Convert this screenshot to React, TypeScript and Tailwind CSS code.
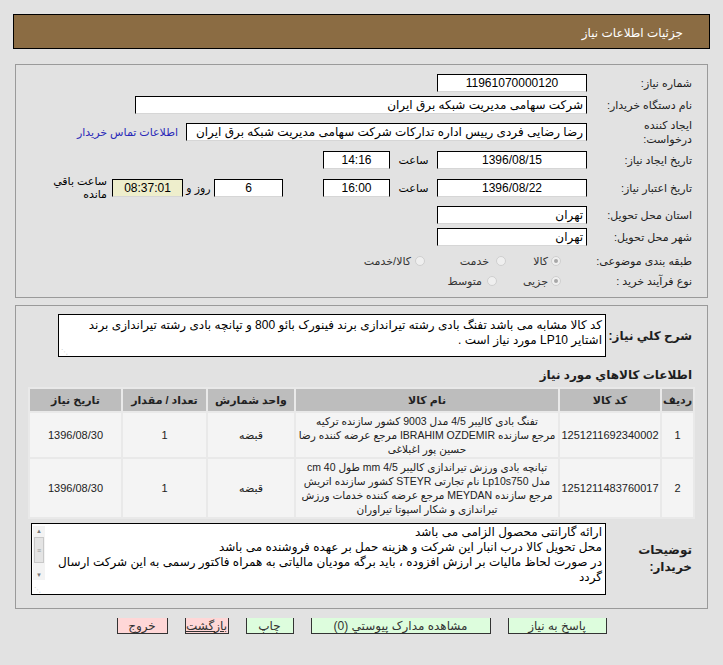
import React from 'react';

const Box = ({ w, children, align = 'center', bg = 'bg-white' }: { w: string; children?: React.ReactNode; align?: string; bg?: string }) => (
  <div className={`${w} ${bg} h-[18px] border-t border-x border-black border-b border-b-[#d6d6d6] flex items-center px-[3px] text-[12px] whitespace-nowrap overflow-hidden ${align === 'center' ? 'justify-center' : 'justify-start'}`}>
    {children}
  </div>
);

const Radio = ({ on }: { on?: boolean }) => (
  <span className="w-[10px] h-[10px] rounded-full border border-[#cfcfcf] bg-[#efefef] flex items-center justify-center shrink-0">
    {on && <span className="w-[4px] h-[4px] rounded-full bg-[#a8a8a8]" />}
  </span>
);

const Label = ({ children }: { children: React.ReactNode }) => (
  <div className="w-[105px] shrink-0 leading-[14px] text-[#1e1e1e]">{children}</div>
);

export default function App() {
  return (
    <div dir="rtl" className="min-h-[665px] bg-[#e2e2e2] pt-[14px] text-[11px] text-black font-['Liberation_Sans','DejaVu_Sans',sans-serif]">
      {/* header */}
      <div className="mx-[13px] h-[35px] border border-black bg-[#8b6c43] flex items-center pr-[26px] pt-[2px] text-white text-[12px]">
        جزئیات اطلاعات نیاز
      </div>

      {/* main info panel */}
      <div className="mx-[15px] mt-[15px] border border-[#9a9a9a] pt-[7px] pb-[7px] pr-[15px]">
        <div className="flex items-center h-[22px]">
          <Label>شماره نیاز:</Label>
          <Box w="w-[150px]">11961070000120</Box>
        </div>
        <div className="flex items-center h-[22px]">
          <Label>نام دستگاه خریدار:</Label>
          <Box w="w-[452px]" align="start">شرکت سهامی مدیریت شبکه برق ایران</Box>
        </div>
        <div className="flex items-center h-[32px]">
          <Label>
            ایجاد کننده
            <br />
            درخواست:
          </Label>
          <Box w="w-[401px]" align="start">رضا رضایی فردی رییس اداره تدارکات شرکت سهامی مدیریت شبکه برق ایران</Box>
          <a className="mr-[8px] text-[#2a2ab8] whitespace-nowrap">اطلاعات تماس خریدار</a>
        </div>
        <div className="flex items-center h-[24px]">
          <Label>تاریخ ایجاد نیاز:</Label>
          <Box w="w-[150px]">1396/08/15</Box>
          <div className="w-[47px] text-center">ساعت</div>
          <Box w="w-[67px]">14:16</Box>
        </div>
        <div className="flex items-center h-[32px]">
          <Label>تاریخ اعتبار نیاز:</Label>
          <Box w="w-[150px]">1396/08/22</Box>
          <div className="w-[47px] text-center">ساعت</div>
          <Box w="w-[67px]">16:00</Box>
          <div className="w-[40px]" />
          <Box w="w-[69px]">6</Box>
          <div className="w-[31px] text-center whitespace-nowrap">روز و</div>
          <Box w="w-[71px]" bg="bg-[#eeeecc]">08:37:01</Box>
          <div className="mr-[5px] w-[64px] leading-[13px]">
            ساعت باقي
            <br />
            مانده
          </div>
        </div>
        <div className="flex items-center h-[22px]">
          <Label>استان محل تحویل:</Label>
          <Box w="w-[150px]" align="start">تهران</Box>
        </div>
        <div className="flex items-center h-[22px]">
          <Label>شهر محل تحویل:</Label>
          <Box w="w-[150px]" align="start">تهران</Box>
        </div>
        <div className="flex items-center h-[22px] mt-[2px]">
          <Label>طبقه بندی موضوعی:</Label>
          <div className="flex items-center text-[#333] mr-[26px]">
            <div className="flex items-center gap-[3px] w-[55px]"><Radio on />کالا</div>
            <div className="flex items-center gap-[7px] w-[81px]"><Radio />خدمت</div>
            <div className="flex items-center gap-[4px]"><Radio />کالا/خدمت</div>
          </div>
        </div>
        <div className="flex items-center h-[18px]">
          <Label>نوع فرآیند خرید :</Label>
          <div className="flex items-center text-[#333] mr-[26px]">
            <div className="flex items-center gap-[3px] w-[64px]"><Radio on />جزیی</div>
            <div className="flex items-center gap-[5px]"><Radio />متوسط</div>
          </div>
        </div>
      </div>

      {/* details panel */}
      <div className="mx-[15px] mt-[7px] border border-[#9a9a9a] pt-[8px] pb-[13px] pr-[12px]">
        <div className="flex items-center">
          <div className="w-[89px] pr-[3px] font-bold text-[12px] text-[#1e1e1e] whitespace-nowrap">شرح کلي نیاز:</div>
          <div className="relative w-[548px] h-[43px] bg-white border border-black px-[3px] pt-[3px] text-[12px] leading-[15px] whitespace-nowrap overflow-hidden">
            <div>کد کالا مشابه می باشد تفنگ بادی رشته تیراندازی برند فینورک بائو 800 و تپانچه بادی رشته تیراندازی برند</div>
            <div>اشتایر LP10 مورد نیاز است .</div>
            <span className="absolute left-[2px] bottom-[1px] text-[7px] leading-none text-[#bbb]">⋰</span>
          </div>
        </div>

        <div className="mt-[8px] pr-[3px] h-[20px] flex items-center font-bold text-[12px] text-[#1e1e1e]">اطلاعات کالاهاي مورد نیاز</div>

        <table className="mt-[2px] w-[667px] table-fixed border-separate border-spacing-[2px] bg-[#e9e9e9] text-center">
          <thead>
            <tr className="h-[22px] bg-[#bdbdbd] font-bold text-[11px] text-[#222]">
              <th className="w-[31px] font-bold">ردیف</th>
              <th className="w-[100px] font-bold">کد کالا</th>
              <th className="w-[262px] font-bold">نام کالا</th>
              <th className="w-[86px] font-bold">واحد شمارش</th>
              <th className="w-[83px] font-bold">تعداد / مقدار</th>
              <th className="font-bold">تاریخ نیاز</th>
            </tr>
          </thead>
          <tbody className="bg-[#f4f4f4] text-[#222] text-[11px] leading-[14px]">
            <tr>
              <td>1</td>
              <td className="px-0 whitespace-nowrap">1251211692340002</td>
              <td className="py-[1px] px-0 text-[10.5px] whitespace-nowrap">
                تفنگ بادی کالیبر 4/5 مدل 9003 کشور سازنده ترکیه
                <br />
                مرجع سازنده IBRAHIM OZDEMIR مرجع عرضه کننده رضا
                <br />
                حسین پور اغبلاغی
              </td>
              <td>قبضه</td>
              <td>1</td>
              <td>1396/08/30</td>
            </tr>
            <tr>
              <td>2</td>
              <td className="px-0 whitespace-nowrap">1251211483760017</td>
              <td className="py-[1px] px-0 text-[10.5px] whitespace-nowrap">
                تپانچه بادی ورزش تیراندازی کالیبر 4/5 mm طول 40 cm
                <br />
                مدل Lp10s750 نام تجارتی STEYR کشور سازنده اتریش
                <br />
                مرجع سازنده MEYDAN مرجع عرضه کننده خدمات ورزش
                <br />
                تیراندازی و شکار اسپوتا تیراوران
              </td>
              <td>قبضه</td>
              <td>1</td>
              <td>1396/08/30</td>
            </tr>
          </tbody>
        </table>

        <div className="mt-[4px] flex items-center">
          <div className="w-[89px] pr-[3px] font-bold text-[12px] text-[#1e1e1e] leading-[17px]">
            توضیحات
            <br />
            خریدار:
          </div>
          <div className="relative w-[575px] h-[72px] bg-white border border-black pr-[3px] pt-[1px] text-[12px] leading-[15px] whitespace-nowrap overflow-hidden">
            <div>ارائه گارانتی محصول الزامی می باشد</div>
            <div>محل تحویل کالا درب انبار این شرکت و هزینه حمل بر عهده فروشنده می باشد</div>
            <div>در صورت لحاظ مالیات بر ارزش افزوده ، باید برگه مودیان مالیاتی به همراه فاکتور رسمی به این شرکت ارسال</div>
            <div>گردد</div>
            {/* scrollbar */}
            <div className="absolute left-[1px] top-[2px] w-[12px] h-[54px] bg-[#f3f3f3] flex flex-col items-center">
              <span className="h-[10px] text-[6px] leading-[10px] text-[#777]">▲</span>
              <div className="w-[10px] h-[26px] mt-[1px] bg-[#e4e4e4] border border-[#c8c8c8] flex items-center justify-center text-[7px] text-[#999]">≡</div>
              <span className="mt-auto h-[10px] text-[6px] leading-[10px] text-[#777]">▼</span>
            </div>
            <span className="absolute left-[2px] bottom-[1px] text-[7px] leading-none text-[#bbb]">⋰</span>
          </div>
        </div>
      </div>

      {/* buttons */}
      <div className="mt-[9px] flex justify-center gap-[17px] text-[12px] text-[#333]">
        <div className="w-[99px] h-[16px] bg-[#ddfddd] border-x border-b border-[#333] flex items-center justify-center">پاسخ به نیاز</div>
        <div className="w-[180px] h-[16px] bg-[#ddfddd] border-x border-b border-[#333] flex items-center justify-center">مشاهده مدارک پیوستي (0)</div>
        <div className="w-[48px] h-[16px] bg-[#ddfddd] border-x border-b border-[#333] flex items-center justify-center">چاپ</div>
        <div className="w-[44px] h-[16px] bg-[#ffd7d7] border-x border-b border-[#333] flex items-center justify-center underline">بازگشت</div>
        <div className="w-[51px] h-[16px] bg-[#ffd7d7] border-x border-b border-[#333] flex items-center justify-center">خروج</div>
      </div>
    </div>
  );
}
